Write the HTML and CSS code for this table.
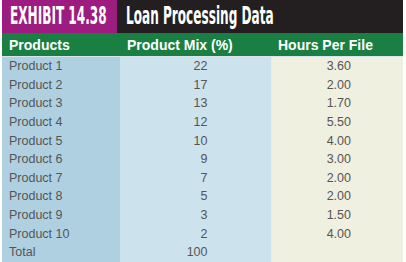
FILE: index.html
```
<!DOCTYPE html>
<html>
	<head>
		<meta charset="UTF-8">
		<title>Exhibit 14.38</title>
		<link rel="stylesheet" href="styles.css">
	</head>
	<body>
		<div class="exhibit">
			<div class="caption">
				<div class="num"><span>EXHIBIT 14.38</span></div>
				<div class="name"><span>Loan Processing Data</span></div>
			</div>
			<table class="data">
				<thead>
					<tr>
						<th class="c1">Products</th>
						<th class="c2">Product Mix (%)</th>
						<th class="c3">Hours Per File</th>
					</tr>
				</thead>
				<tbody>
					<tr><td class="c1">Product 1</td><td class="c2">22</td><td class="c3">3.60</td></tr>
					<tr><td class="c1">Product 2</td><td class="c2">17</td><td class="c3">2.00</td></tr>
					<tr><td class="c1">Product 3</td><td class="c2">13</td><td class="c3">1.70</td></tr>
					<tr><td class="c1">Product 4</td><td class="c2">12</td><td class="c3">5.50</td></tr>
					<tr><td class="c1">Product 5</td><td class="c2">10</td><td class="c3">4.00</td></tr>
					<tr><td class="c1">Product 6</td><td class="c2">9</td><td class="c3">3.00</td></tr>
					<tr><td class="c1">Product 7</td><td class="c2">7</td><td class="c3">2.00</td></tr>
					<tr><td class="c1">Product 8</td><td class="c2">5</td><td class="c3">2.00</td></tr>
					<tr><td class="c1">Product 9</td><td class="c2">3</td><td class="c3">1.50</td></tr>
					<tr><td class="c1">Product 10</td><td class="c2">2</td><td class="c3">4.00</td></tr>
					<tr><td class="c1">Total</td><td class="c2">100</td><td class="c3"></td></tr>
				</tbody>
			</table>
		</div>
	</body>
</html>
```
FILE: styles.css
```
body {
	margin: 0;
	background: #fff;
}

.exhibit {
	width: 401px;
	margin: 0 0 0 2px;
	font-family: "Liberation Sans", Arial, sans-serif;
}

.caption {
	display: flex;
	height: 33px;
}

.caption .num {
	width: 115px;
	background: #9c1c80;
}

.caption .name {
	flex: 1;
	background: #231f20;
}

.caption span {
	display: inline-block;
	color: #fff;
	font: bold 24px/33px "DejaVu Sans Condensed", "DejaVu Sans", sans-serif;
	transform: scaleX(0.56);
	transform-origin: left center;
	white-space: nowrap;
}

.caption .num span {
	margin-left: 8px;
}

.caption .name span {
	margin-left: 9px;
}

.data {
	width: 401px;
	border-collapse: collapse;
	table-layout: fixed;
}

.data th {
	background: #1a7f43;
	color: #fff;
	font-size: 14px;
	font-weight: bold;
	text-align: left;
	height: 23px;
	padding: 0 0 0 7px;
	border-bottom: 1px solid #d8e6ec;
}

.data th.c1 {
	width: 111px;
}

.data th.c2 {
	width: 144px;
}

.data td {
	height: 18.6px;
	padding: 0;
	font-size: 12.5px;
	color: #555;
}

.data td.c1 {
	background: #afd0e1;
	padding-left: 7px;
}

.data td.c2 {
	background: #cce2ed;
	text-align: right;
	padding-right: 63px;
	border-right: 1px solid #e4eef2;
}

.data td.c3 {
	background: #eff0df;
	text-align: right;
	padding-right: 52px;
}
```
